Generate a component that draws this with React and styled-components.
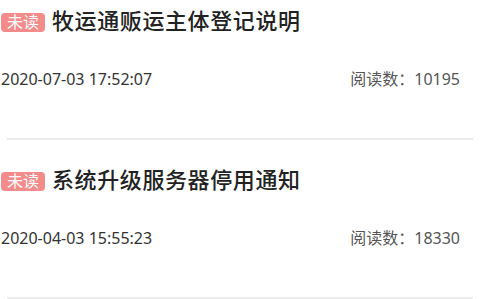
import React from 'react';
import styled, { createGlobalStyle } from 'styled-components';

const GlobalStyle = createGlobalStyle`
  html, body {
    margin: 0;
    padding: 0;
    background: #ffffff;
    font-family: Roboto, "Noto Sans CJK SC", sans-serif;
  }
`;

const List = styled.div`
  width: 480px;
  padding-left: 1px;
  box-sizing: border-box;
`;

const Item = styled.div`
  padding-top: ${(p) => (p.first ? 10 : 29)}px;
  padding-bottom: 47px;
  padding-right: 20px;
`;

const TitleRow = styled.div`
  display: flex;
  align-items: center;
  height: 24px;
  gap: 7px;
`;

const Badge = styled.span`
  display: inline-flex;
  align-items: center;
  justify-content: center;
  height: 19px;
  padding: 0 6px;
  border-radius: 4px;
  background: #f48b8b;
  color: #ffffff;
  font-size: 16px;
  line-height: 19px;
`;

const Title = styled.span`
  font-size: 22px;
  letter-spacing: 0.6px;
  font-weight: 500;
  color: #222222;
  line-height: 24px;
  white-space: nowrap;
`;

const Meta = styled.div`
  display: flex;
  justify-content: space-between;
  align-items: center;
  margin-top: 33px;
  height: 24px;
  font-family: "Noto Sans", "Noto Sans CJK SC", sans-serif;
  font-size: 16px;
  line-height: 24px;
`;

const Date = styled.span`
  color: #333333;
`;

const Reads = styled.span`
  color: #555555;
`;

const Divider = styled.div`
  height: 2px;
  margin: 0 7px 0 6px;
  background: #ececec;
`;

const notices = [
  { title: '牧运通贩运主体登记说明', date: '2020-07-03 17:52:07', reads: 10195 },
  { title: '系统升级服务器停用通知', date: '2020-04-03 15:55:23', reads: 18330 },
];

export default function App() {
  return (
    <>
      <GlobalStyle />
      <List>
        {notices.map((n, i) => (
          <React.Fragment key={n.date}>
            <Item first={i === 0}>
              <TitleRow>
                <Badge>未读</Badge>
                <Title>{n.title}</Title>
              </TitleRow>
              <Meta>
                <Date>{n.date}</Date>
                <Reads>阅读数：{n.reads}</Reads>
              </Meta>
            </Item>
            <Divider />
          </React.Fragment>
        ))}
      </List>
    </>
  );
}
